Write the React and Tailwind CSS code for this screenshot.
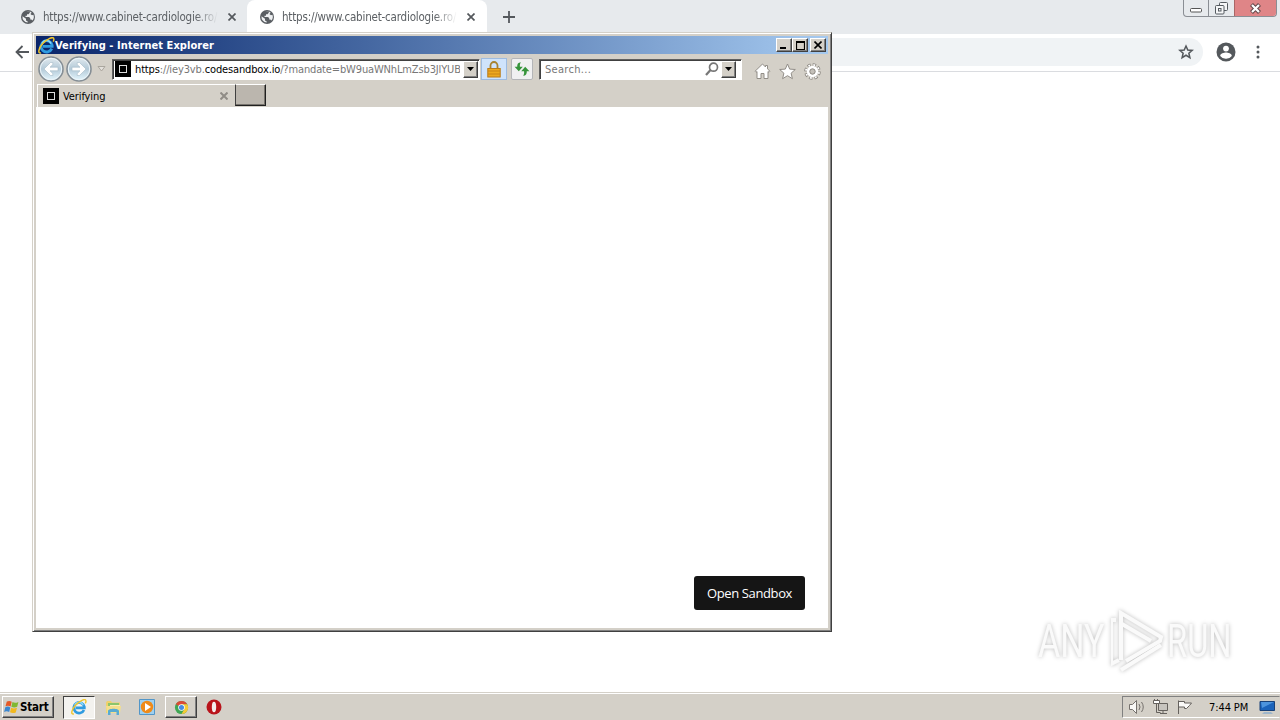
import clsx from "clsx";

const tahoma = "font-['DejaVu_Sans_Condensed','DejaVu_Sans',sans-serif]";

function Globe() {
  return (
    <svg width="14" height="14" viewBox="0 0 14 14" className="shrink-0">
      <circle cx="7" cy="7" r="7" fill="#5a5e63" />
      <path d="M1.5 6.2 5 8.8v1.6l1.7 1v1.2A5.7 5.7 0 0 1 1.5 6.2Z" fill="#eef0f2" />
      <path d="M5.5 1.6h3.3v1.1L7.5 4.2H6v1.6H4.5V7h3.4l1.3 1v1.5h1.2l1 1a5.6 5.6 0 0 0 1-5.8L11 5.2 9.4 4.1l1.3-1.4A5.6 5.6 0 0 0 5.5 1.6Z" fill="#eef0f2" />
    </svg>
  );
}

function Cross({ size = 8, color = "#54585c", stroke = 1.7 }) {
  return (
    <svg width={size} height={size} viewBox="0 0 8 8" className="shrink-0">
      <path d="m.5.5 7 7m0-7-7 7" stroke={color} strokeWidth={stroke} />
    </svg>
  );
}

function ChromeTab({ active }) {
  return (
    <div
      className={clsx(
        "flex h-[34px] w-[240px] items-center rounded-t-lg pl-[13px]",
        active ? "bg-white" : "bg-[#e7eaed]"
      )}
    >
      <Globe />
      <div className="ml-[8px] w-[175px] overflow-hidden whitespace-nowrap pt-px text-[11.5px] tracking-[-0.19px] text-[#5c6064] [mask-image:linear-gradient(to_right,black_87%,transparent)]">
        https://www.cabinet-cardiologie.ro/
      </div>
      <div className="ml-[10px] flex"><Cross /></div>
    </div>
  );
}

function ChromeCaption() {
  return (
    <div className="flex h-[17px] w-[94px] overflow-hidden rounded-b-[4px] border border-t-0 border-[#8a8e94]">
      <div className="flex w-[25px] items-center justify-center border-r border-[#8a8e94]">
        <svg width="13" height="5" className="mt-[4px]"><rect x=".5" y=".5" width="11" height="3.5" rx="1" fill="#fff" stroke="#555" /></svg>
      </div>
      <div className="flex w-[25px] items-center justify-center">
        <svg width="13" height="13" fill="#f5f6f7" stroke="#555b60">
          <rect x="4.5" y=".5" width="8" height="8" rx="1" />
          <rect x=".5" y="3.5" width="8.5" height="8.5" rx="1" />
          <rect x="3.5" y="6.5" width="2.5" height="2.5" />
        </svg>
      </div>
      <div className="flex flex-1 items-center justify-center border-l border-[#a66] bg-[#df8587] pr-px">
        <svg width="13" height="11" viewBox="0 0 13 11">
          <path d="m2.5 1.5 8 8m0-8-8 8" stroke="#60474a" strokeWidth="4.2" />
          <path d="m3 2 7 7m0-7-7 7" stroke="#fff" strokeWidth="2.2" />
        </svg>
      </div>
    </div>
  );
}

function ChromeWindow() {
  return (
    <div className="flex h-[692px] flex-col bg-white">
      <div className="flex h-[34px] items-start bg-[#e7eaed] pl-2">
        <ChromeTab />
        <div className="-ml-px"><ChromeTab active /></div>
        <svg width="12" height="12" className="ml-[16px] mt-[11px]">
          <path d="M6 0v12M0 6h12" stroke="#54585c" strokeWidth="1.8" />
        </svg>
        <div className="ml-auto mr-[3px]"><ChromeCaption /></div>
      </div>
      <div className="flex h-[38px] shrink-0 items-center border-b border-[#dadce0] pb-[2px] pl-[15px]">
        <svg width="14" height="14" fill="none" stroke="#54585c" strokeWidth="1.8">
          <path d="M14 7H1.5M7.5 1l-6 6 6 6" />
        </svg>
        <div className="ml-[8px] flex h-[28px] flex-1 items-center justify-end rounded-full bg-[#f0f3f5]">
          <div className="flex h-[28px] w-[34px] items-center justify-center rounded-full">
            <svg width="16" height="16" viewBox="0 0 24 24" fill="none" stroke="#54585c" strokeWidth="2.3">
              <path d="m12 3 2.7 6 6.5.6-4.9 4.3 1.5 6.5-5.8-3.5-5.8 3.5 1.5-6.5-4.9-4.3 6.5-.6Z" />
            </svg>
          </div>
        </div>
        <svg width="20" height="20" viewBox="0 0 20 20" className="ml-[13px]">
          <circle cx="10" cy="10" r="9.5" fill="#54585c" />
          <circle cx="10" cy="6.6" r="2.9" fill="#fff" />
          <path d="M4.2 14c0-2.4 3.9-3.4 5.8-3.4s5.8 1 5.8 3.4A7 7 0 0 1 10 16.8 7 7 0 0 1 4.2 14Z" fill="#fff" />
        </svg>
        <svg width="4" height="16" fill="#54585c" className="ml-[20px] mr-[20px]">
          <circle cx="2" cy="3" r="1.5" /><circle cx="2" cy="8" r="1.5" /><circle cx="2" cy="13" r="1.5" />
        </svg>
      </div>
    </div>
  );
}

function IeLogo({ size = 17 }) {
  return (
    <svg width={size} height={size} viewBox="0 0 18 18" className="shrink-0">
      <path d="M14.6 12.3A6 6 0 1 1 15 8.7v1.2H5.2" fill="none" stroke="#2f9be0" strokeWidth="3" />
      <path d="M4.2 7.2a5 5 0 0 1 9.5-.2" fill="none" stroke="#8ad8fa" strokeWidth="1.5" />
      <path d="M3.3 16.8C-.7 17.9.6 11.8 5 7 9.8 1.8 16-.8 16.7 1.6c.3.9 0 2.2-.6 3.3" fill="none" stroke="#efc52d" strokeWidth="1.6" />
    </svg>
  );
}

const raised = "border border-t-white border-l-white border-r-[#404040] border-b-[#404040] bg-[#d4d0c8] shadow-[inset_-1px_-1px_0_#808080]";

function CaptionButton({ children }) {
  return <div className={clsx("flex h-[14px] w-[16px] items-center justify-center", raised)}>{children}</div>;
}

function RoundNav({ flip }) {
  return (
    <svg width="26" height="26" viewBox="0 0 26 26" className={flip ? "-scale-x-100" : ""}>
      <defs>
        <linearGradient id="navFill" x2="0" y2="1">
          <stop offset="0" stopColor="#e3ebf0" /><stop offset=".5" stopColor="#b4cad8" /><stop offset="1" stopColor="#e6f8ff" />
        </linearGradient>
      </defs>
      <circle cx="13" cy="13" r="12" fill="url(#navFill)" stroke="#858e95" strokeWidth="1.6" />
      <circle cx="13" cy="13" r="10.7" fill="none" stroke="#edf5f9" />
      <path d="m12.5 6.5-6.5 6.5 6.5 6.5h2.3v-2L12 14.8h8v-3.6h-8l2.8-2.7v-2Z" fill="#fff" stroke="#a5bbc8" strokeWidth=".6" />
    </svg>
  );
}

function Favicon() {
  return (
    <div className="flex size-4 shrink-0 items-center justify-center bg-black">
      <div className="size-[8px] border border-[#ddd]" />
    </div>
  );
}

function DropButton() {
  return (
    <div className={clsx("flex h-[17px] w-[15px] shrink-0 items-center justify-center", raised)}>
      <svg width="7" height="4"><path d="M0 0h7L3.5 4Z" /></svg>
    </div>
  );
}

const field = "flex h-[21px] border border-t-[#606060] border-l-[#606060] border-r-white border-b-white bg-white shadow-[inset_1px_1px_0_#404040]";

function IeToolbar() {
  return (
    <div className="flex h-[30px] items-center pl-[2px]">
      <div className="flex w-[56px] gap-[2px]"><RoundNav /><RoundNav flip /></div>
      <svg width="9" height="6" className="ml-[3px]"><path d="M1 .5h7L4.5 5Z" fill="#e4e1dc" stroke="#aaa69e" /></svg>
      <div className={clsx("ml-[6px] w-[368px] items-center pl-[2px]", field)}>
        <Favicon />
        <div className="ml-[4px] w-[325px] overflow-hidden whitespace-nowrap pt-[2px] text-[11px] tracking-[-0.14px] text-[#777]">
          <span className="text-black">https</span>://iey3vb.<span className="text-black">codesandbox.io</span>/?mandate=bW9uaWNhLmZsb3JlYUB
        </div>
        <div className="ml-[3px]"><DropButton /></div>
      </div>
      <div className="ml-px flex h-[22px] w-[26px] items-center justify-center border border-[#9dbbe0] bg-[#cfe3fb]">
        <svg width="14" height="17" viewBox="0 0 14 17">
          <path d="M3.5 8V4.5a3.5 3.5 0 0 1 7 0V8" fill="none" stroke="#a8832f" strokeWidth="1.8" />
          <rect x=".8" y="7.5" width="12.4" height="8.5" fill="#eda91f" stroke="#b87b18" />
          <path d="M1 10h12M1 13h12" stroke="#c98317" />
        </svg>
      </div>
      <div className="ml-[4px] flex h-[22px] w-[22px] items-center justify-center rounded-[2px] border border-[#b4b5b8] bg-[#f0f0f1]">
        <svg width="16" height="16" viewBox="0 0 14 14" fill="#36943b">
          <path d="M6 1C3.5 1.2 2.7 2.6 2.8 5H.5l3.7 4 3.5-4H5.2C5 3.4 5.2 2.3 6 1Z" />
          <path d="M8 13c2.5-.2 3.3-1.6 3.2-4h2.3L9.8 5 6.3 9h2.5c.2 1.6 0 2.7-.8 4Z" />
        </svg>
      </div>
      <div className={clsx("ml-[6px] w-[203px] items-center pl-[5px]", field)}>
        <span className="pt-[2px] text-[11px] tracking-[0.3px] text-[#777]">Search...</span>
        <svg width="14" height="14" fill="none" stroke="#777" className="ml-auto mr-[2px]">
          <circle cx="8.5" cy="5.2" r="4" strokeWidth="1.7" /><path d="m5.5 8-4.5 5" strokeWidth="2.2" />
        </svg>
        <div className="mr-[5px]"><DropButton /></div>
      </div>
      <div className="ml-[12px] mt-[4px] flex gap-[8px]">
        <svg width="17" height="17" viewBox="0 0 17 17" fill="#fff" stroke="#918d87">
          <path d="M8.5 1 1 8.3l1 1 1-.8v7h4v-5h3v5h4v-7l1 .8 1-1-2.5-2.4V2.5h-2V4Z" />
        </svg>
        <svg width="17" height="17" viewBox="0 0 17 17" fill="#fff" stroke="#918d87">
          <path d="m8.5 1 2.2 5.1 5.6.4-4.2 3.7 1.3 5.5-4.9-3-4.9 3 1.3-5.5L.7 6.5l5.6-.4Z" />
        </svg>
        <svg width="17" height="17" viewBox="0 0 17 17">
          <circle cx="8.5" cy="8.5" r="6.6" fill="none" stroke="#8d8983" strokeWidth="3.4" strokeDasharray="3.2 1.98" />
          <circle cx="8.5" cy="8.5" r="6.6" fill="none" stroke="#fff" strokeWidth="1.8" strokeDasharray="1.8 3.38" strokeDashoffset="-.7" />
          <circle cx="8.5" cy="8.5" r="4.2" fill="none" stroke="#fff" strokeWidth="3" />
          <circle cx="8.5" cy="8.5" r="2.7" fill="#c4c0b9" stroke="#8d8983" />
        </svg>
      </div>
    </div>
  );
}

function IeWindow() {
  return (
    <div className="absolute left-[32px] top-[32px] flex h-[600px] w-[800px] flex-col border border-t-[#d4d0c8] border-l-[#d4d0c8] border-r-[#404040] border-b-[#404040] bg-[#d4d0c8] p-[3px] shadow-[inset_1px_1px_0_#fff,inset_-1px_-1px_0_#808080]">
      <div className="flex h-[18px] items-center bg-linear-to-r from-[#0a246a] to-[#a6caf0] pl-[2px] pr-[2px]">
        <IeLogo />
        <span className="whitespace-nowrap pt-[2px] text-[11px] font-bold tracking-[0.06px] text-white">Verifying - Internet Explorer</span>
        <div className="ml-auto flex">
          <CaptionButton><svg width="8" height="8"><path d="M0 7h6" stroke="#000" strokeWidth="2" /></svg></CaptionButton>
          <CaptionButton><svg width="9" height="9"><path d="M.5 1v7.5h8V1M0 1h9" fill="none" stroke="#000" strokeWidth="1.2" /><path d="M0 1h9" stroke="#000" strokeWidth="2" /></svg></CaptionButton>
          <div className="ml-[2px]"><CaptionButton><Cross color="#000" stroke={1.6} /></CaptionButton></div>
        </div>
      </div>
      <IeToolbar />
      <div className="flex h-[23px] shrink-0 pl-px">
        <div className="flex w-[198px] items-center border-t border-l border-white pl-[5px]">
          <Favicon />
          <span className="ml-[4px] pt-[2px] text-[11px] tracking-[-0.1px] text-black">Verifying</span>
          <div className="ml-auto mr-[7px]"><Cross color="#908c86" stroke={2} /></div>
        </div>
        <div className="h-[22px] w-[31px] border border-t-white border-l-[#404040] border-r-[#202020] border-b-[#202020] bg-[#bbb6ae] shadow-[inset_-1px_-1px_0_#77736d]" />
      </div>
      <div className="flex flex-1 items-end justify-end bg-white pb-[18px] pr-[23px]">
        <div className="flex h-[34px] w-[111px] items-center justify-center rounded-[3px] bg-[#151515] pt-px font-['Open_Sans','Noto_Sans',sans-serif] text-[13px] tracking-[-0.38px] text-white">
          Open Sandbox
        </div>
      </div>
    </div>
  );
}

function Watermark() {
  return (
    <div className="absolute left-[1034px] top-[606px] flex h-[70px] w-[206px] items-center font-['Roboto',sans-serif] text-[46px] leading-[56px] text-[#fafafa] drop-shadow-[0_0_2px_#bbb]">
      <span className="ml-[4px] w-[73px] origin-left scale-x-[.74]">ANY</span>
      <svg width="56" height="70" viewBox="0 0 56 70" fill="none" stroke="#fafafa" strokeWidth="4" className="shrink-0">
        <path d="M10 54V7l40 24-1 4-34 20" />
        <path d="M5 14H0v44l8-4" />
        <path d="m10 64 40-25M11 18l29 17" />
      </svg>
      <span className="w-[66px] origin-left scale-x-[.71]">RUN</span>
    </div>
  );
}

function Taskbar() {
  return (
    <div className="flex h-[28px] items-center border-t border-[#d4d0c8] bg-[#d4d0c8] pl-[2px] pt-px shadow-[inset_0_1px_0_#fff]">
      <div className={clsx("flex h-[22px] w-[52px] items-center pl-px", raised)}>
        <svg width="16" height="16" viewBox="0 0 17 16">
          <path d="M3 2.2c2-1 3.5-.8 5.2.2L7 7.5C5.2 6.5 3.6 6.4 1.6 7.3Z" fill="#e65a27" />
          <path d="M9 2.8c2 1 3.7 1 6.3-.2L14 7.8c-2.3 1-4 1-6.2 0Z" fill="#80b833" />
          <path d="M1.4 8.2c2-1 3.7-.8 5.3.2l-1.2 5C3.9 12.4 2 12.3.1 13.2Z" fill="#3b87d0" />
          <path d="M7.6 8.8c2 1 3.7 1 6.2 0l-1.3 5c-2.3 1-4 .9-6.1-.1Z" fill="#f2b91f" />
        </svg>
        <span className="pt-px text-[11.5px] font-bold tracking-[-0.2px] text-black">Start</span>
      </div>
      <div className="ml-[9px] flex h-[23px] w-[32px] items-center justify-center border border-t-[#404040] border-l-[#404040] border-r-white border-b-white bg-[#f3f2ef]">
        <IeLogo size={16} />
      </div>
      <svg width="17" height="17" viewBox="0 0 17 17" className="ml-[10px]">
        <path d="M1 3.5 2 2h4l1 1.5h8V14H1Z" fill="#efd16c" />
        <path d="M3 4h11v4H3Z" fill="#8cc56b" /><path d="M5 6h10v3H5Z" fill="#fbefb2" />
        <path d="M1 7h15l-1 7H2Z" fill="#f4df8c" />
        <path d="M3 16v-4c0-3 11-3 11 0v4h-2.5v-3h-6v3Z" fill="#58abd2" />
      </svg>
      <svg width="16" height="16" viewBox="0 0 16 16" className="ml-[17px]">
        <path d="M.5 .5h15v15H.5Z" fill="#9ed0f0" stroke="#5296c8" />
        <circle cx="8" cy="8" r="6.2" fill="#ef8a18" /><path d="m6 4 6 4-6 4Z" fill="#fff" />
      </svg>
      <div className={clsx("ml-[10px] flex h-[22px] w-[32px] items-center justify-center", raised)}>
        <svg width="15" height="15" viewBox="0 0 16 16">
          <circle cx="8" cy="8" r="7" fill="#3fa653" />
          <path d="M8 8 1.9 4.5A7 7 0 0 1 14.1 4.5L8 4.5Z" fill="#dc4935" />
          <path d="M14.1 4.5A7 7 0 0 1 8 15l3-5.2L8 4.5Z" fill="#f7ca35" />
          <circle cx="8" cy="8" r="3.5" fill="#fff" /><circle cx="8" cy="8" r="2.7" fill="#478be0" />
        </svg>
      </div>
      <svg width="16" height="16" viewBox="0 0 16 16" className="ml-[9px]">
        <circle cx="8" cy="8" r="7.5" fill="#b9141b" /><ellipse cx="8" cy="8" rx="2.2" ry="5.3" fill="#f4eeee" />
      </svg>
      <div className="ml-auto flex h-[22px] w-[158px] items-center border border-t-[#808080] border-l-[#808080] border-r-[#d4d0c8] border-b-white pl-[5px]">
        <svg width="18" height="16" fill="#f8f7f5" stroke="#75716d">
          <path d="M1.5 5.5h3l4-4v13l-4-4h-3Z" /><path d="M11 5q2 3 0 6m2.5-8q3.5 5 0 10" fill="none" />
        </svg>
        <svg width="18" height="16" fill="#fff" stroke="#65615d" className="ml-[6px]">
          <path d="M6.5 4.5h9v7h-9Z" fill="#c7c4be" /><path d="M8 14.5h7M11 12v2" />
          <path d="M4.5 5v8.5h4" fill="none" /><path d="M2.5 0v2M5.5 0v2M1.5 1.5h6v3h-6Z" />
        </svg>
        <svg width="17" height="16" fill="#faf9f7" stroke="#65615d" className="ml-[6px]">
          <path d="M2.5 15V1.500M2.5 2.5h6v1.5h7l-2 2.5-3 3h-2V8h-6Z" />
        </svg>
        <span className="ml-[16px] w-[44px] whitespace-nowrap pt-[2px] text-[11px] tracking-[-0.1px] text-black">7:44 PM</span>
        <svg width="17" height="16" viewBox="0 0 17 16" className="ml-[6px]">
          <path d="M1 2.5h14.5v9H1Z" fill="#1b63ba" stroke="#184178" /><path d="M2 3h13L3 9Z" fill="#4d94dd" />
          <path d="M5 13h7l2 2H3Z" fill="#9eb6cb" />
        </svg>
      </div>
    </div>
  );
}

export default function App() {
  return (
    <div className={clsx("relative h-[720px] w-[1280px] overflow-hidden bg-white", tahoma)}>
      <ChromeWindow />
      <Taskbar />
      <Watermark />
      <IeWindow />
    </div>
  );
}
